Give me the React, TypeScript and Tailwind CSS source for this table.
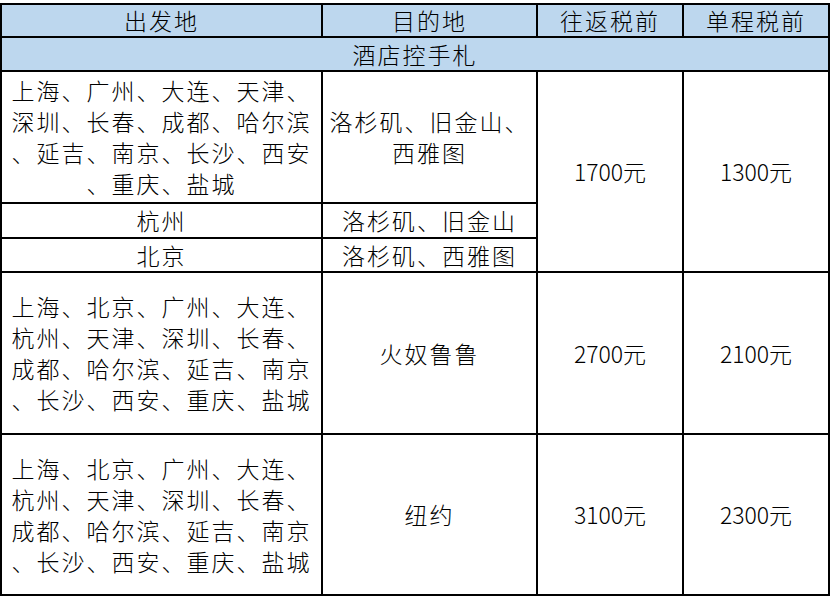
const cities1 = ["上海、广州、大连、天津、", "深圳、长春、成都、哈尔滨", "、延吉、南京、长沙、西安", "、重庆、盐城"]
const cities2 = ["上海、北京、广州、大连、", "杭州、天津、深圳、长春、", "成都、哈尔滨、延吉、南京", "、长沙、西安、重庆、盐城"]

function Lines({ lines }: { lines: string[] }) {
  return (
    <>
      {lines.map((l, i) => (
        <div key={i} className="whitespace-nowrap">
          {l}
        </div>
      ))}
    </>
  )
}

export default function App() {
  const cell = "border-2 border-black text-center align-middle p-0"
  const cn = "tracking-[2px]"
  return (
    <div
      className="bg-white w-[830px] h-[596px] pt-[3px] text-black font-light"
      style={{ fontFamily: '"Noto Sans CJK SC", "Noto Sans", sans-serif' }}
    >
      <table className="border-collapse table-fixed w-[828px] text-[23px] leading-[31px]">
        <colgroup>
          <col className="w-[321px]" />
          <col className="w-[215px]" />
          <col className="w-[146px]" />
          <col className="w-[146px]" />
        </colgroup>
        <tbody>
          <tr className="h-[32px] bg-[#bdd7ee]">
            <td className={`${cell} ${cn}`}>出发地</td>
            <td className={`${cell} ${cn}`}>目的地</td>
            <td className={`${cell} ${cn}`}>往返税前</td>
            <td className={`${cell} ${cn}`}>单程税前</td>
          </tr>
          <tr className="h-[34px] bg-[#bdd7ee]">
            <td colSpan={4} className={`${cell} ${cn}`}>
              酒店控手札
            </td>
          </tr>
          <tr className="h-[132px]">
            <td className={`${cell} ${cn}`}>
              <Lines lines={cities1} />
            </td>
            <td className={`${cell} ${cn}`}>
              <Lines lines={["洛杉矶、旧金山、", "西雅图"]} />
            </td>
            <td rowSpan={3} className={cell}>
              1700元
            </td>
            <td rowSpan={3} className={cell}>
              1300元
            </td>
          </tr>
          <tr className="h-[35px]">
            <td className={`${cell} ${cn}`}>杭州</td>
            <td className={`${cell} ${cn}`}>洛杉矶、旧金山</td>
          </tr>
          <tr className="h-[34px]">
            <td className={`${cell} ${cn}`}>北京</td>
            <td className={`${cell} ${cn}`}>洛杉矶、西雅图</td>
          </tr>
          <tr className="h-[162px]">
            <td className={`${cell} ${cn}`}>
              <Lines lines={cities2} />
            </td>
            <td className={`${cell} ${cn}`}>火奴鲁鲁</td>
            <td className={cell}>2700元</td>
            <td className={cell}>2100元</td>
          </tr>
          <tr className="h-[161px]">
            <td className={`${cell} ${cn}`}>
              <Lines lines={cities2} />
            </td>
            <td className={`${cell} ${cn}`}>纽约</td>
            <td className={cell}>3100元</td>
            <td className={cell}>2300元</td>
          </tr>
        </tbody>
      </table>
    </div>
  )
}
